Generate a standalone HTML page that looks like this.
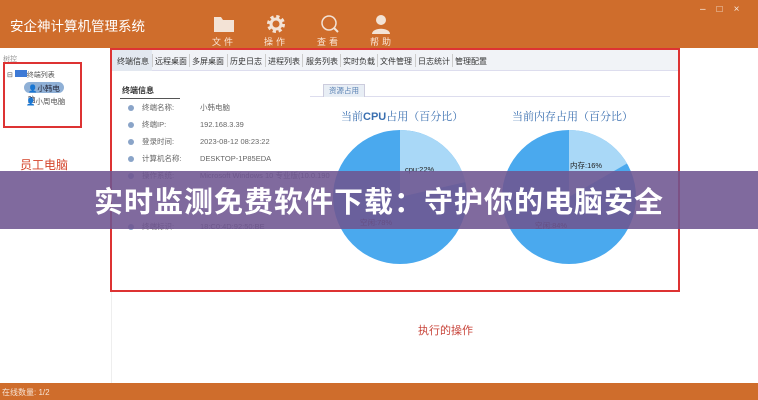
<!DOCTYPE html>
<html><head><meta charset="utf-8"><style>
*{margin:0;padding:0;box-sizing:border-box}
body{width:758px;height:400px;overflow:hidden;position:relative;background:#fff;font-family:"Liberation Sans","Noto Sans CJK SC",sans-serif;color:#444}
.abs{position:absolute}
#hdr{left:0;top:0;width:758px;height:48px;background:#cf6d2c}
#title{left:10px;top:15px;color:#fff;font-size:13.5px;letter-spacing:0}
.ti{color:#fbe6d6;font-size:9px;text-align:center;width:40px;letter-spacing:3px}
#bot{left:0;top:383px;width:758px;height:17px;background:#cf6d2c;font-size:8px;padding:4px 2px;color:#f6e3d4}
.red{border:2px solid #d33;}
.tab{font-size:8px;color:#333;top:56px;white-space:nowrap}
.sep{position:absolute;top:54px;width:1px;height:13px;background:#ccc}
.row{font-size:7.5px;color:#666;left:128px}
.row b{display:inline-block;width:6px;height:6px;border-radius:3px;background:#8aa4c8;margin-right:8px;vertical-align:middle}
.row span{display:inline-block;width:58px}
#band{left:0;top:171px;width:758px;height:58px;background:rgba(110,85,145,.88)}
#bt{left:0;top:171px;width:758px;height:58px;line-height:58px;text-align:center;color:#fff;font-weight:bold;font-size:29px;letter-spacing:1px;font-family:"Noto Sans CJK SC",sans-serif}
</style></head><body>
<div id="hdr" class="abs"></div>
<div id="title" class="abs">安企神计算机管理系统</div>
<svg class="abs" style="left:213px;top:15px" width="22" height="18"><path d="M1 2h7l2 3h11v12H1z" fill="#f3e3d6"/></svg>
<div class="abs ti" style="left:204px;top:35px">文件</div>
<svg class="abs" style="left:265px;top:13px" width="22" height="22"><circle cx="11" cy="11" r="7" fill="none" stroke="#f3e3d6" stroke-width="4" stroke-dasharray="3 2.5"/><circle cx="11" cy="11" r="5" fill="none" stroke="#f3e3d6" stroke-width="3"/></svg>
<div class="abs ti" style="left:256px;top:35px">操作</div>
<svg class="abs" style="left:319px;top:13px" width="22" height="22"><circle cx="10" cy="10" r="7" fill="none" stroke="#f3e3d6" stroke-width="1.5"/><path d="M15 15l4 4" stroke="#f3e3d6" stroke-width="2"/></svg>
<div class="abs ti" style="left:309px;top:35px">查看</div>
<svg class="abs" style="left:370px;top:13px" width="22" height="22"><circle cx="11" cy="7" r="5" fill="#f3e3d6"/><path d="M2 21c0-7 18-7 18 0z" fill="#f3e3d6"/></svg>
<div class="abs ti" style="left:362px;top:35px">帮助</div>
<div class="abs" style="left:700px;top:4px;color:#f6e6da;font-size:10px;letter-spacing:11px">–□×</div>

<div class="abs" style="left:3px;top:54px;font-size:7px;color:#999">树控</div>
<div class="abs red" style="left:3px;top:62px;width:79px;height:66px"></div>
<div class="abs" style="left:7px;top:70px;font-size:7px;color:#555">⊟ <span style="display:inline-block;width:12px;height:7px;background:#3d7ad6"></span>终端列表</div>
<div class="abs" style="left:24px;top:82px;width:40px;height:11px;border-radius:6px;background:#8fb0d6;font-size:7.5px;color:#223;padding:1px 4px">👤小韩电脑</div>
<div class="abs" style="left:26px;top:96px;font-size:7.5px;color:#555">👤小周电脑</div>
<div class="abs" style="left:20px;top:156px;font-size:12px;color:#d4432a">员工电脑</div>
<div class="abs" style="left:111px;top:48px;width:1px;height:335px;background:#eee"></div>

<div class="abs red" style="left:110px;top:48px;width:570px;height:244px"></div>
<div class="abs" style="left:112px;top:50px;width:566px;height:21px;background:#f1f3f7;border-bottom:1px solid #dde"></div>
<div class="abs" style="left:112px;top:50px;width:40px;height:21px;background:#e3e8f0"></div>
<div class="abs tab" style="left:117px">终端信息</div><div class="sep" style="left:152px"></div>
<div class="abs tab" style="left:155px">远程桌面</div><div class="sep" style="left:189px"></div>
<div class="abs tab" style="left:192px">多屏桌面</div><div class="sep" style="left:227px"></div>
<div class="abs tab" style="left:230px">历史日志</div><div class="sep" style="left:265px"></div>
<div class="abs tab" style="left:268px">进程列表</div><div class="sep" style="left:302px"></div>
<div class="abs tab" style="left:306px">服务列表</div><div class="sep" style="left:340px"></div>
<div class="abs tab" style="left:343px">实时负载</div><div class="sep" style="left:377px"></div>
<div class="abs tab" style="left:380px">文件管理</div><div class="sep" style="left:415px"></div>
<div class="abs tab" style="left:418px">日志统计</div><div class="sep" style="left:452px"></div>
<div class="abs tab" style="left:455px">管理配置</div>
<div class="abs" style="left:122px;top:85px;font-size:8px;font-weight:bold;color:#333">终端信息</div>
<div class="abs" style="left:120px;top:98px;width:60px;height:1px;background:#555"></div>
<div class="abs row" style="top:102px"><b></b><span>终端名称:</span>小韩电脑</div>
<div class="abs row" style="top:119px"><b></b><span>终端IP:</span>192.168.3.39</div>
<div class="abs row" style="top:136px"><b></b><span>登录时间:</span>2023-08-12 08:23:22</div>
<div class="abs row" style="top:153px"><b></b><span>计算机名称:</span>DESKTOP-1P85EDA</div>
<div class="abs row" style="top:170px"><b></b><span>操作系统:</span>Microsoft Windows 10 专业版(10.0.190</div>
<div class="abs row" style="top:221px"><b></b><span>终端标识:</span>18:C0:4D:92:50:BE</div>
<div class="abs" style="left:310px;top:96px;width:360px;height:1px;background:#dde"></div>
<div class="abs" style="left:323px;top:84px;width:42px;height:13px;background:#e8eef5;border:1px solid #ccd;border-bottom:none;font-size:7.5px;color:#5a82b4;text-align:center;line-height:12px">资源占用</div>
<div class="abs" style="left:341px;top:108px;font-size:11px;color:#3a6fb0;font-family:'Noto Serif CJK SC',serif">当前<b style="font-family:'Liberation Sans'">CPU</b>占用（百分比）</div>
<div class="abs" style="left:512px;top:108px;font-size:11px;color:#3a6fb0;font-family:'Noto Serif CJK SC',serif">当前内存占用（百分比）</div>
<svg class="abs" style="left:0;top:0" width="758" height="400">
<circle cx="400" cy="197" r="67" fill="#4aa9ee"/>
<path d="M400 197V130A67 67 0 0 1 465.3 182.1z" fill="#a9d8f7"/>
<circle cx="569" cy="197" r="67" fill="#4aa9ee"/>
<path d="M569 197V130A67 67 0 0 1 627 163.5z" fill="#a9d8f7"/>
<text x="405" y="172" font-size="7.5" fill="#222" font-family="Liberation Sans">cpu:22%</text>
<text x="570" y="168" font-size="7.5" fill="#222" font-family="Liberation Sans,Noto Sans CJK SC">内存:16%</text>
<text x="360" y="225" font-size="7.5" fill="#222" font-family="Liberation Sans,Noto Sans CJK SC">空闲:78%</text>
<text x="535" y="228" font-size="7.5" fill="#222" font-family="Liberation Sans,Noto Sans CJK SC">空闲:84%</text>
</svg>
<div class="abs" style="left:418px;top:322px;font-size:11px;color:#c8443a">执行的操作</div>
<div id="bot" class="abs">在线数量: 1/2</div>
<div id="band" class="abs"></div>
<div id="bt" class="abs">实时监测免费软件下载：守护你的电脑安全</div>
</body></html>
